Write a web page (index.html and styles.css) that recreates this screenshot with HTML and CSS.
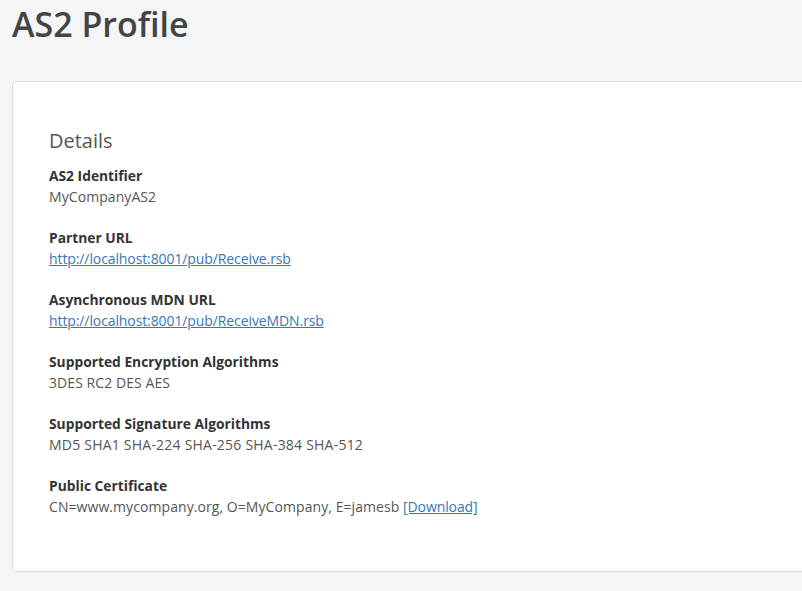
FILE: index.html
```html
<!DOCTYPE html>
<html>
<head>
<meta charset="utf-8">
<link rel="stylesheet" href="styles.css">
</head>
<body>
<div class="page">
  <h1 class="title">AS2 Profile</h1>
  <div class="card">
    <h2 class="section">Details</h2>
    <div class="field">
      <div class="label">AS2 Identifier</div>
      <div class="value">MyCompanyAS2</div>
    </div>
    <div class="field">
      <div class="label">Partner URL</div>
      <div class="value"><a class="link" href="#">http://localhost:8001/pub/Receive.rsb</a></div>
    </div>
    <div class="field">
      <div class="label">Asynchronous MDN URL</div>
      <div class="value"><a class="link" href="#">http://localhost:8001/pub/ReceiveMDN.rsb</a></div>
    </div>
    <div class="field">
      <div class="label">Supported Encryption Algorithms</div>
      <div class="value">3DES RC2 DES AES</div>
    </div>
    <div class="field">
      <div class="label">Supported Signature Algorithms</div>
      <div class="value algos">MD5 SHA1 SHA-224 SHA-256 SHA-384 SHA-512</div>
    </div>
    <div class="field">
      <div class="label">Public Certificate</div>
      <div class="value">CN=www.mycompany.org, O=MyCompany, E=jamesb <a class="link" href="#">[Download]</a></div>
    </div>
  </div>
</div>
</body>
</html>
```

FILE: styles.css
```css
html, body {
  margin: 0;
  padding: 0;
  background: #f4f5f7;
  font-family: "Open Sans", "Noto Sans", sans-serif;
  color: #444;
  overflow: hidden;
}
.page {
  padding: 0 0 0 12px;
}
.title {
  margin: 0;
  padding-top: 1px;
  font-size: 34px;
  line-height: 46px;
  font-weight: 600;
  color: #444;
}
.card {
  margin-top: 34px;
  width: 820px;
  box-sizing: border-box;
  background: #fff;
  border: 1px solid #dcdcdc;
  border-radius: 4px;
  padding: 45px 36px 33px;
  height: 491px;
}
.section {
  margin: 0 0 11px;
  font-size: 20px;
  line-height: 28px;
  font-weight: 500;
  color: #555;
}
.field {
  margin-bottom: 20px;
}
.label {
  font-size: 13.8px;
  font-weight: 700;
  line-height: 20px;
  color: #333;
}
.value {
  font-size: 14px;
  letter-spacing: 0.07px;
  line-height: 22px;
  color: #555;
}
.value.algos {
  letter-spacing: 0.22px;
}
.link {
  color: #3776b6;
  letter-spacing: -0.1px;
  text-decoration: underline;
}
```
